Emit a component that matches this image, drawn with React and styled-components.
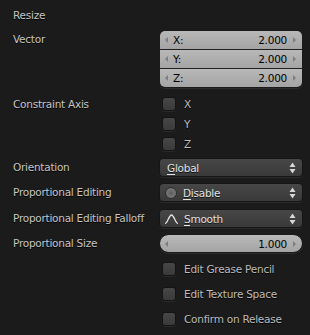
import React from 'react';
import styled, { createGlobalStyle } from 'styled-components';

const GlobalStyle = createGlobalStyle`
  html, body {
    margin: 0;
    padding: 0;
    background: #1b1b1b;
  }
  body {
    font-family: "DejaVu Sans", "Liberation Sans", sans-serif;
    font-size: 10.5px;
    letter-spacing: -0.25px;
  }
`;

const Panel = styled.div`
  width: 310px;
  height: 335px;
  background: #1b1b1b;
  color: #c6c6c6;
  overflow: hidden;
`;

const Title = styled.div`
  height: 30px;
  line-height: 30px;
  padding-left: 13px;
  text-shadow: 0 1px 0 #000;
`;

const Row = styled.div`
  display: grid;
  grid-template-columns: 146px 144px;
  padding-left: 13px;
  margin-top: ${p => p.$top || 0}px;
  align-items: start;
`;

const Label = styled.div`
  height: ${p => p.$h || 19}px;
  line-height: ${p => p.$h || 19}px;
  white-space: nowrap;
  text-shadow: 0 1px 0 #000;
`;

const VectorBox = styled.div`
  border: 1px solid #1a1a1a;
  border-radius: 6px;
  overflow: hidden;
  box-shadow: 0 1px 0 #2c2c2c;
`;

const VectorCell = styled.div`
  height: 18px;
  display: flex;
  align-items: center;
  padding: 0 6px 0 5px;
  background: linear-gradient(#b8b8b8, #a4a4a4);
  color: #000;
  border-top: ${p => (p.$first ? 'none' : '1px solid #202020')};
`;

const CellLabel = styled.span`
  flex: 1;
  margin-left: 5px;
`;

const Arrow = styled.span`
  width: 0;
  height: 0;
  border-top: 3px solid transparent;
  border-bottom: 3px solid transparent;
  ${p =>
    p.$dir === 'left'
      ? 'border-right: 3px solid #7e7e7e;'
      : 'border-left: 3px solid #7e7e7e;'}
`;

const Value = styled.span`
  margin-right: 6px;
`;

const Slider = styled(VectorCell)`
  border: 1px solid #1a1a1a;
  border-radius: 10px;
  height: 17px;
  box-shadow: 0 1px 0 #2c2c2c;
`;

const CheckRow = styled.div`
  height: ${p => p.$h}px;
  display: flex;
  align-items: center;
  gap: 8px;
  padding-left: 3px;
`;

const Box = styled.span`
  flex-shrink: 0;
  width: 12px;
  height: 12px;
  border: 1px solid #141414;
  border-radius: 3px;
  background: linear-gradient(#474747, #3a3a3a);
  box-shadow: 0 1px 0 #2a2a2a;
`;

const CheckText = styled.span`
  color: #bdbdbd;
  text-shadow: 0 1px 0 #000;
`;

const Menu = styled.div`
  height: 17px;
  display: flex;
  align-items: center;
  gap: 5px;
  padding: 0 6px 0 ${p => (p.$icon ? 4 : 7)}px;
  border: 1px solid #161616;
  border-radius: 4px;
  background: linear-gradient(#474747, #393939);
  color: #e2e2e2;
  box-shadow: 0 1px 0 #2a2a2a;
  svg {
    flex-shrink: 0;
  }
`;

const MenuText = styled.span`
  flex: 1;
  text-shadow: 0 1px 0 #111;
  u {
    text-decoration: none;
    border-bottom: 1px solid #e2e2e2;
  }
`;

const Updown = () => (
  <svg width="7" height="12" viewBox="0 0 7 12">
    <path d="M3.5 0.5 L6.5 5 L0.5 5 Z" fill="#d8d8d8" />
    <path d="M3.5 11.5 L6.5 7 L0.5 7 Z" fill="#d8d8d8" />
  </svg>
);

const DisableIcon = () => (
  <svg width="14" height="14" viewBox="0 0 14 14">
    <defs>
      <radialGradient id="dg" cx="0.5" cy="0.5" r="0.55">
        <stop offset="0" stopColor="#5e5e5e" />
        <stop offset="0.7" stopColor="#767676" />
        <stop offset="1" stopColor="#555" />
      </radialGradient>
    </defs>
    <circle cx="7" cy="7" r="5.5" fill="url(#dg)" stroke="#2e2e2e" />
  </svg>
);

const SmoothIcon = () => (
  <svg width="15" height="12" viewBox="0 0 15 12">
    <path
      d="M1 10.5 C3.5 10.5 5 2 7.5 2 C10 2 11.5 10.5 14 10.5"
      fill="none"
      stroke="#e6e6e6"
      strokeWidth="1.3"
    />
  </svg>
);

const axes = [
  ['X', '2.000'],
  ['Y', '2.000'],
  ['Z', '2.000'],
];

export default function App() {
  return (
    <Panel>
      <GlobalStyle />
      <Title>Resize</Title>
      <Row>
        <Label>Vector</Label>
        <VectorBox>
          {axes.map(([a, v], i) => (
            <VectorCell key={a} $first={i === 0}>
              <Arrow $dir="left" />
              <CellLabel>{a}:</CellLabel>
              <Value>{v}</Value>
              <Arrow $dir="right" />
            </VectorCell>
          ))}
        </VectorBox>
      </Row>
      <Row $top={6}>
        <Label $h={20}>Constraint Axis</Label>
        <div>
          {['X', 'Y', 'Z'].map(a => (
            <CheckRow key={a} $h={20}>
              <Box />
              <CheckText>{a}</CheckText>
            </CheckRow>
          ))}
        </div>
      </Row>
      <Row $top={4}>
        <Label>Orientation</Label>
        <Menu>
          <MenuText><u>G</u>lobal</MenuText>
          <Updown />
        </Menu>
      </Row>
      <Row $top={6}>
        <Label>Proportional Editing</Label>
        <Menu $icon>
          <DisableIcon />
          <MenuText><u>D</u>isable</MenuText>
          <Updown />
        </Menu>
      </Row>
      <Row $top={7}>
        <Label>Proportional Editing Falloff</Label>
        <Menu $icon>
          <SmoothIcon />
          <MenuText><u>S</u>mooth</MenuText>
          <Updown />
        </Menu>
      </Row>
      <Row $top={6}>
        <Label>Proportional Size</Label>
        <Slider>
          <Arrow $dir="left" />
          <CellLabel />
          <Value>1.000</Value>
          <Arrow $dir="right" />
        </Slider>
      </Row>
      <Row $top={3}>
        <div />
        <div>
          {['Edit Grease Pencil', 'Edit Texture Space', 'Confirm on Release'].map(t => (
            <CheckRow key={t} $h={25}>
              <Box />
              <CheckText>{t}</CheckText>
            </CheckRow>
          ))}
        </div>
      </Row>
    </Panel>
  );
}
